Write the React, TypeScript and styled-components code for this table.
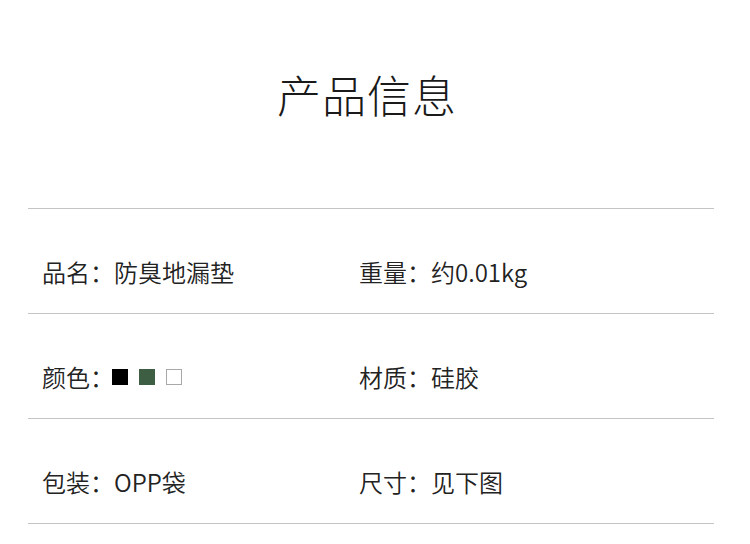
import React from 'react';
import styled, { createGlobalStyle } from 'styled-components';

const GlobalStyle = createGlobalStyle`
  body {
    margin: 0;
    background: #fff;
    font-family: "Noto Sans CJK SC", "Noto Sans", sans-serif;
    color: #222;
  }
`;

const Page = styled.div`
  width: 750px;
  height: 544px;
  padding: 0 36px 0 28px;
  box-sizing: border-box;
`;

const Title = styled.h1`
  margin: 0;
  height: 208px;
  display: flex;
  align-items: center;
  justify-content: center;
  padding: 0 8px 20px 0;
  box-sizing: border-box;
  font-family: "Noto Sans CJK SC Light", "Noto Sans CJK SC DemiLight", "Noto Sans CJK SC", sans-serif;
  font-size: 44px;
  font-weight: 200;
  letter-spacing: 1px;
  color: #1a1a1a;
`;

const Table = styled.div`
  border-bottom: 1px solid #c4c4c4;
`;

const Row = styled.div`
  display: grid;
  grid-template-columns: 317px 1fr;
  align-items: center;
  height: 105px;
  box-sizing: border-box;
  border-top: 1px solid #c4c4c4;
  padding: 22px 0 0 14px;
`;

const Cell = styled.div`
  display: flex;
  align-items: center;
  font-family: "Noto Sans CJK SC DemiLight", "Noto Sans CJK SC", sans-serif;
  font-size: 24px;
  font-weight: 300;
  line-height: 1;
  color: #222;
  white-space: nowrap;
`;

const Swatches = styled.span`
  display: inline-flex;
  gap: 11px;
  margin-left: -2px;
`;

const Swatch = styled.span<{ $color: string; $outline?: boolean }>`
  width: 16px;
  height: 16px;
  box-sizing: border-box;
  background: ${(p) => p.$color};
  border: ${(p) => (p.$outline ? '1px solid #a8a8a8' : 'none')};
`;

export default function App() {
  return (
    <Page>
      <GlobalStyle />
      <Title>产品信息</Title>
      <Table>
        <Row>
          <Cell>品名：防臭地漏垫</Cell>
          <Cell>重量：约0.01kg</Cell>
        </Row>
        <Row>
          <Cell>
            颜色：
            <Swatches>
              <Swatch $color="#000" />
              <Swatch $color="#3e5e44" />
              <Swatch $color="#fff" $outline />
            </Swatches>
          </Cell>
          <Cell>材质：硅胶</Cell>
        </Row>
        <Row>
          <Cell>包装：OPP袋</Cell>
          <Cell>尺寸：见下图</Cell>
        </Row>
      </Table>
    </Page>
  );
}
